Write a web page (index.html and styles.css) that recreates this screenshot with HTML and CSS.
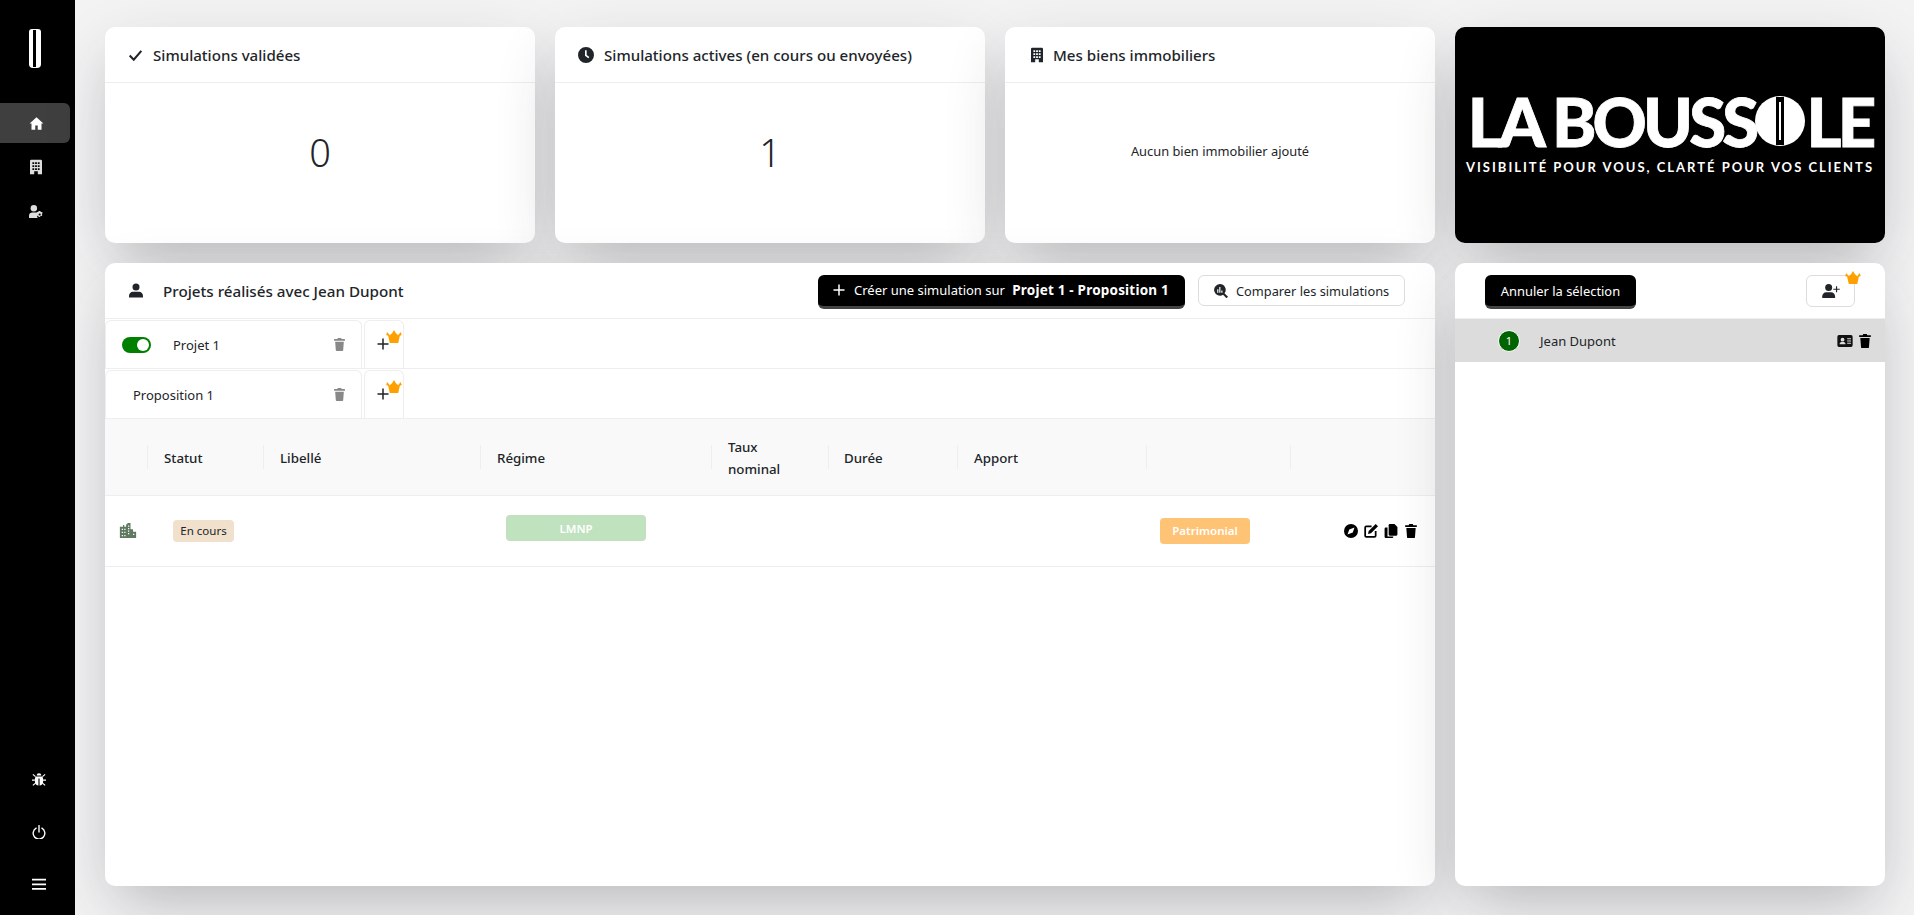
FILE: index.html
```html
<!DOCTYPE html>
<html lang="fr">
<head>
  <meta charset="UTF-8" />
  <meta name="viewport" content="width=device-width, initial-scale=1" />
  <title>La Boussole</title>
  <link rel="stylesheet" href="styles.css">
</head>
<body>
  <svg class="sprite" aria-hidden="true">
    <symbol id="i-home" viewBox="0 0 24 24"><path d="M12 2 1 12h3v10h6v-7h4v7h6V12h3z"/></symbol>
    <symbol id="i-building" viewBox="0 0 20 24"><path fill-rule="evenodd" d="M2 0h16a2 2 0 0 1 2 2v22h-7v-5H7v5H0V2a2 2 0 0 1 2-2zM4 4v3h3V4zm4.500 0v3h3V4zM13 4v3h3V4zM4 9v3h3V9zm4.500 0v3h3V9zM13 9v3h3V9zM4 14v3h3v-3zm4.500 0v3h3v-3zM13 14v3h3v-3z"/></symbol>
    <symbol id="i-usercog" viewBox="0 0 26 24"><circle cx="9" cy="6" r="6"/><path d="M0 24v-4c0-4 3-6 6-6h6c1.500 0 2.500.4 3.500 1-1 2-1 6 .5 9z"/><path fill-rule="evenodd" d="M21 11l1 2 2.300-.2 1 2-1.500 1.700 1 1.800-1 2-2.300-.2-1 2h-2.500l-1-2-2.300.2-1-2 1.500-1.800-1.500-1.700 1-2 2.300.2 1-2zm-1.200 4.500a2 2 0 1 0 0 4 2 2 0 0 0 0-4z"/></symbol>
    <symbol id="i-bug" viewBox="0 0 24 24"><path d="M8 6a4 4 0 0 1 8 0z"/><path d="M6.500 7.500h11c.8 1 1.500 2.500 1.500 4v6c0 3-3 5.500-6 5.500V11h-2v12c-3 0-6-2.500-6-5.500v-6c0-1.500.7-3 1.500-4z"/><path d="M1.500 4 6 8M22.500 4 18 8M0 14h5M24 14h-5M1.500 23 6 19M22.500 23 18 19" fill="none" stroke="currentColor" stroke-width="2"/></symbol>
    <symbol id="i-power" viewBox="0 0 24 24"><path d="M7 5.500a10 10 0 1 0 10 0M12 1v11" fill="none" stroke="currentColor" stroke-width="2.400" stroke-linecap="round"/></symbol>
    <symbol id="i-menu" viewBox="0 0 24 24"><path d="M0 3h24v3H0zM0 11h24v3H0zM0 19h24v3H0z"/></symbol>
    <symbol id="i-check" viewBox="0 0 24 24"><path d="M2 13l7 7L22 5" fill="none" stroke="currentColor" stroke-width="3.600"/></symbol>
    <symbol id="i-clock" viewBox="0 0 24 24"><path fill-rule="evenodd" d="M12 0a12 12 0 1 1 0 24 12 12 0 0 1 0-24zm-1.500 5v8l5 4 1.500-2-4-3V5z"/></symbol>
    <symbol id="i-user" viewBox="0 0 24 24"><circle cx="12" cy="6" r="6"/><path d="M0 24v-3c0-4 3-7 7-7h10c4 0 7 3 7 7v3z"/></symbol>
    <symbol id="i-plus" viewBox="0 0 24 24"><path d="M10.500 1h3v9.500H23v3h-9.500V23h-3v-9.500H1v-3h9.500z"/></symbol>
    <symbol id="i-search" viewBox="0 0 24 24"><path fill-rule="evenodd" d="M10 0a10 10 0 0 1 8 16l6 6-2.500 2.500-6-6A10 10 0 1 1 10 0zM9 5v10h2V5zM5.500 9v6h2V9zm7 2v4h2v-4z"/></symbol>
    <symbol id="i-trash" viewBox="0 0 20 24"><path d="M7 0h6l1 2h6v3H0V2h6zM2 7h16l-1.200 15.500A1.700 1.700 0 0 1 15 24H5a1.700 1.700 0 0 1-1.800-1.500z"/></symbol>
    <symbol id="i-crown" viewBox="0 0 24 20"><path d="M5.500 20 3 9 0 7.500 1.500 3l2.500 3 1.500 2L9 5 12 0l3 5 3.500 3L22 3l2 4.500L21 9l-2.500 11z"/></symbol>
    <symbol id="i-city" viewBox="0 0 26 24"><path fill-rule="evenodd" d="M0 6h5V3h2v3h3V2h2V0h5v10h4v4h5v10H0zm3 3v2h2V9zm4 0v2h2V9zm6-5v2h2V4zm0 4v2h2V8zm0 4v2h2v-2zM3 14v2h2v-2zm4 0v2h2v-2zm14 3v2h2v-2zM3 19v2h2v-2zm4 0v2h2v-2zm6-3v2h2v-2z"/></symbol>
    <symbol id="i-compass" viewBox="0 0 24 24"><path fill-rule="evenodd" d="M12 0a12 12 0 1 1 0 24 12 12 0 0 1 0-24zm6 6-9 3.500L6 18l9-3.500z"/></symbol>
    <symbol id="i-edit" viewBox="0 0 24 24"><path d="M13 4H4a2 2 0 0 0-2 2v14a2 2 0 0 0 2 2h14a2 2 0 0 0 2-2v-8" fill="none" stroke="currentColor" stroke-width="3"/><path d="M20 0l4 4L12 16l-5 1 1-5z"/></symbol>
    <symbol id="i-copy" viewBox="0 0 24 24"><path d="M10 0h8l5 5v13a2 2 0 0 1-2 2H10a2 2 0 0 1-2-2V2a2 2 0 0 1 2-2z"/><path d="M6 6H3a2 2 0 0 0-2 2v14a2 2 0 0 0 2 2h11a2 2 0 0 0 2-2v-.500H6z"/></symbol>
    <symbol id="i-idcard" viewBox="0 0 28 22"><path fill-rule="evenodd" d="M3 0h22a3 3 0 0 1 3 3v16a3 3 0 0 1-3 3H3a3 3 0 0 1-3-3V3a3 3 0 0 1 3-3zm6.500 5a3.500 3.500 0 1 0 0 7 3.500 3.500 0 0 0 0-7zM4 17h11c0-3-2-4-5.500-4S4 14 4 17zM18 6v2h7V6zm0 4v2h7v-2zm0 4v2h7v-2z"/></symbol>
    <symbol id="i-useradd" viewBox="0 0 30 24"><circle cx="11" cy="6" r="6"/><path d="M0 24v-3c0-4 3-7 7-7h8c4 0 7 3 7 7v3z"/><path d="M23.500 4h2v4H30v2h-4.500v4h-2v-4H19V8h4.500z"/></symbol>
  </svg>

  <aside class="sidebar">
    <div class="side-logo"><span></span></div>
    <nav class="side-nav">
      <a class="side-link active"><svg class="ico-home"><use href="#i-home"/></svg></a>
      <a class="side-link"><svg class="ico-building"><use href="#i-building"/></svg></a>
      <a class="side-link"><svg class="ico-cog"><use href="#i-usercog"/></svg></a>
    </nav>
    <div class="side-foot">
      <a><svg><use href="#i-bug"/></svg></a>
      <a><svg><use href="#i-power"/></svg></a>
      <a><svg><use href="#i-menu"/></svg></a>
    </div>
  </aside>

  <main class="content">
    <section class="card stat">
      <h3 class="card-head"><svg class="head-check"><use href="#i-check"/></svg>Simulations validées</h3>
      <div class="card-body"><span class="num">0</span></div>
    </section>
    <section class="card stat">
      <h3 class="card-head"><svg class="head-clock"><use href="#i-clock"/></svg>Simulations actives (en cours ou envoyées)</h3>
      <div class="card-body"><span class="num">1</span></div>
    </section>
    <section class="card stat">
      <h3 class="card-head"><svg class="head-build"><use href="#i-building"/></svg>Mes biens immobiliers</h3>
      <div class="card-body"><span class="empty">Aucun bien immobilier ajouté</span></div>
    </section>
    <section class="card brand">
      <div class="brand-name">LA BOUSS<svg class="brand-o" viewBox="0 0 50 50" role="img" aria-label="O"><circle cx="25" cy="25" r="25" fill="#fff"/><path d="M21 1h8v48h-8z" fill="#000"/><path d="M24 6h2v38h-2z" fill="#fff"/></svg>LE</div>
      <div class="brand-tag">VISIBILITÉ POUR VOUS, CLARTÉ POUR VOS CLIENTS</div>
    </section>

    <section class="card projects">
      <header class="proj-head">
        <svg class="ico-user"><use href="#i-user"/></svg>
        <h3>Projets réalisés avec Jean Dupont</h3>
        <button class="btn-black btn-create"><svg><use href="#i-plus"/></svg>Créer une simulation sur <b>Projet 1 - Proposition 1</b></button>
        <button class="btn-white btn-compare"><svg><use href="#i-search"/></svg>Comparer les simulations</button>
      </header>

      <div class="tabs">
        <div class="tab"><span class="toggle"></span><span class="tab-label">Projet 1</span><svg class="tab-trash"><use href="#i-trash"/></svg></div>
        <div class="tab-add"><svg class="plus"><use href="#i-plus"/></svg><svg class="crown"><use href="#i-crown"/></svg></div>
      </div>
      <div class="tabs">
        <div class="tab tab-sub"><span class="tab-label">Proposition 1</span><svg class="tab-trash"><use href="#i-trash"/></svg></div>
        <div class="tab-add"><svg class="plus"><use href="#i-plus"/></svg><svg class="crown"><use href="#i-crown"/></svg></div>
      </div>

      <table class="sim-table">
        <colgroup>
          <col class="c-icon"><col class="c-status"><col class="c-label"><col class="c-regime"><col class="c-rate"><col class="c-time"><col class="c-apport"><col class="c-type"><col>
        </colgroup>
        <thead>
          <tr><th></th><th>Statut</th><th>Libellé</th><th>Régime</th><th>Taux<br>nominal</th><th class="th-tight">Durée</th><th>Apport</th><th></th><th></th></tr>
        </thead>
        <tbody>
          <tr>
            <td class="cell-city"><svg><use href="#i-city"/></svg></td>
            <td><span class="badge badge-status">En cours</span></td>
            <td></td>
            <td class="cell-regime"><span class="badge badge-regime">LMNP</span></td>
            <td></td><td></td><td></td>
            <td class="cell-type"><span class="badge badge-type">Patrimonial</span></td>
            <td class="cell-actions">
              <svg><use href="#i-compass"/></svg><svg><use href="#i-edit"/></svg><svg><use href="#i-copy"/></svg><svg><use href="#i-trash"/></svg>
            </td>
          </tr>
        </tbody>
      </table>
    </section>

    <section class="card clients">
      <header class="client-head">
        <button class="btn-black btn-cancel">Annuler la sélection</button>
        <button class="btn-white btn-add"><svg><use href="#i-useradd"/></svg><svg class="crown"><use href="#i-crown"/></svg></button>
      </header>
      <div class="client-row">
        <span class="client-num">1</span>
        <span class="client-name">Jean Dupont</span>
        <svg class="ico-id"><use href="#i-idcard"/></svg>
        <svg class="ico-del"><use href="#i-trash"/></svg>
      </div>
    </section>
  </main>
</body>
</html>
```

FILE: styles.css
```css
*{box-sizing:border-box;}
html,body{margin:0;padding:0;height:100%;}
body{display:flex;height:100vh;overflow:hidden;background:#f3f3f4;color:#212529;font-family:'Noto Sans','Open Sans',sans-serif;font-size:13px;}
svg{fill:currentColor;display:block;}
.sprite{display:none;}

.sidebar{width:75px;flex:none;background:#000;color:#fff;display:flex;flex-direction:column;}
.side-logo{width:12px;height:39px;margin:29px 0 0 29px;background:#fff;border-radius:3px 3px 4px 4px;position:relative;}
.side-logo span{position:absolute;left:4px;top:1px;bottom:1px;width:3px;background:#000;}
.side-nav{margin-top:35px;}
.side-link{display:flex;align-items:center;justify-content:center;width:70px;height:40px;margin-bottom:4px;padding-left:2px;border-radius:0 6px 6px 0;color:#ddd;}
.side-link.active{background:#3f3f3f;color:#fff;}
.ico-home{width:15px;height:15px;}
.ico-building{width:12px;height:16px;}
.ico-cog{width:14px;height:13px;}
.side-foot{margin-top:auto;padding:0 0 24px 32px;display:flex;flex-direction:column;gap:38.500px;}
.side-foot a{display:block;height:14px;}
.side-foot svg{width:14px;height:14px;}

.content{flex:1;min-width:0;padding:27px 29px 29px 30px;display:grid;grid-template-columns:repeat(4,430px);grid-template-rows:216px 1fr;gap:20px;}
.card{background:#fff;border-radius:10px;box-shadow:0 24px 60px -10px rgba(40,40,45,.3);display:flex;flex-direction:column;min-height:0;position:relative;}

.card-head{margin:0;height:56px;padding:0 20px 0 23px;display:flex;align-items:center;border-bottom:1px solid #eee;font-size:15.100px;font-weight:500;}
.card-head svg{flex:none;}
.head-check{width:15px;height:14px;margin-right:10px;}
.head-clock{width:16px;height:16px;margin-right:10px;}
.head-build{width:12px;height:16px;margin:0 10px 0 3px;}
.card-body{flex:1;display:flex;align-items:center;justify-content:center;padding-bottom:22px;}
.num{font-size:38px;font-weight:300;}
.empty{font-size:12.85px;padding-bottom:2px;}

.brand{background:#000;color:#fff;align-items:center;padding-top:67px;}
.brand-name{display:flex;align-items:center;white-space:pre;font-family:'Lato',sans-serif;font-size:67px;font-weight:900;line-height:54px;letter-spacing:-3.800px;-webkit-text-stroke:.8px #fff;}
.brand-o{width:50px;height:50px;flex:none;margin:0 1px 0 0;}
.brand-tag{margin-top:11px;font-family:'Lato',sans-serif;font-size:13px;font-weight:700;letter-spacing:2px;white-space:nowrap;}

.projects{grid-column:span 3;}
.proj-head{height:56px;flex:none;padding:0 30px 0 24px;display:flex;align-items:center;border-bottom:1px solid #eee;}
.ico-user{width:14px;height:15px;flex:none;}
.proj-head h3{margin:0 auto 0 20px;font-size:15.200px;font-weight:500;}
.btn-black,.btn-white{font-family:inherit;font-size:12.8px;cursor:pointer;display:flex;align-items:center;white-space:pre;}
.btn-black{background:#000;color:#fff;border:none;border-bottom:3px solid #444;border-radius:6px;height:34px;}
.btn-white{background:#fff;color:#212529;border:1px solid #ddd;border-radius:6px;height:31px;}
.btn-create{width:367px;padding:0 0 0 15px;margin-bottom:-2px;font-size:13px;}
.btn-create svg{width:12px;height:12px;margin-right:9px;}
.btn-create b{margin-left:4px;font-size:13.5px;font-weight:700;letter-spacing:.2px;}
.btn-compare{width:207px;margin-left:13px;padding:0 0 0 15px;}
.btn-compare svg{width:14px;height:14px;margin-right:8px;}

.tabs{height:50px;flex:none;display:flex;border-bottom:1px solid #eee;}
.tab{width:257px;margin-top:1px;display:flex;align-items:center;padding:0 16px 0 16px;border:1px solid #eee;border-bottom:none;border-radius:6px 6px 0 0;}
.tab-sub{padding-left:27px;}
.toggle{width:29px;height:16px;border-radius:8px;background:#008000;position:relative;flex:none;margin-right:22px;}
.toggle::after{content:'';position:absolute;right:2px;top:2px;width:12px;height:12px;border-radius:50%;background:#fff;}
.tab-label{flex:1;font-size:13px;}
.tab-trash{width:11px;height:13px;color:#888;}
.tab-add{width:40px;margin:1px 0 0 2px;position:relative;border:1px solid #eee;border-bottom:none;border-radius:6px 6px 0 0;}
.plus{position:absolute;left:12px;top:17px;width:12px;height:12px;color:#222;}
.tab-add .crown{position:absolute;left:21px;top:9px;width:16px;height:13px;color:#ffa000;}

.sim-table{width:100%;table-layout:fixed;border-collapse:collapse;}
.c-icon{width:42px;}
.c-status{width:116px;}
.c-label{width:217px;}
.c-regime{width:231px;}
.c-rate{width:117px;}
.c-time{width:129px;}
.c-apport{width:189px;}
.c-type{width:144px;}
.sim-table thead tr{height:76px;background:#f9f9f9;border-bottom:1px solid #eee;}
.sim-table th{padding:2px 16px 0 17px;text-align:left;font-size:13.3px;font-weight:500;line-height:22px;position:relative;}
.sim-table th.th-tight{padding-left:16px;}
.sim-table th+th::before{content:'';position:absolute;left:0;top:26px;bottom:26px;width:1px;background:#eee;}
.sim-table tbody tr{height:71px;border-bottom:1px solid #eee;}
.sim-table td{padding:0;vertical-align:middle;}
.cell-city{padding-left:13px !important;}
.cell-city svg{width:20px;height:15px;color:#5f7a5f;}
.badge{display:inline-flex;align-items:center;justify-content:center;border-radius:4px;font-size:11.5px;}
.badge-status{width:61px;height:22px;margin-left:26px;background:#f0e0cc;font-weight:400;}
.badge-regime{width:140px;height:26px;margin:0 0 5px 26px;background:#c0e2bf;color:#fff;font-weight:600;}
.badge-type{width:90px;height:26px;margin-left:14px;background:#ffc375;color:#fff;font-weight:600;}
.cell-actions{display:flex;align-items:center;height:70px;gap:6px;padding-left:54px !important;color:#000;}
.cell-actions svg{width:14px;height:14px;}

.client-head{height:56px;flex:none;display:flex;align-items:flex-start;padding:12px 30px 0 30px;justify-content:space-between;border-bottom:1px solid #eee;}
.btn-cancel{width:151px;justify-content:center;font-size:12.9px;}
.btn-add{width:49px;height:32px;justify-content:center;position:relative;}
.btn-add svg{width:18px;height:14px;}
.btn-add .crown{position:absolute;right:-7px;top:-5px;width:16px;height:13px;color:#ffa000;}
.client-row{height:43px;background:#dcdcdc;display:flex;align-items:center;padding:0 14px 0 43px;}
.client-num{width:22px;height:22px;flex:none;display:flex;align-items:center;justify-content:center;border-radius:50%;border:1px solid #fff;background:#006400;color:#fff;font-size:11px;}
.client-name{flex:1;margin-left:20px;font-size:13px;}
.ico-id{width:16px;height:12px;color:#111;margin-right:6px;}
.ico-del{width:12px;height:14px;color:#000;}
```
